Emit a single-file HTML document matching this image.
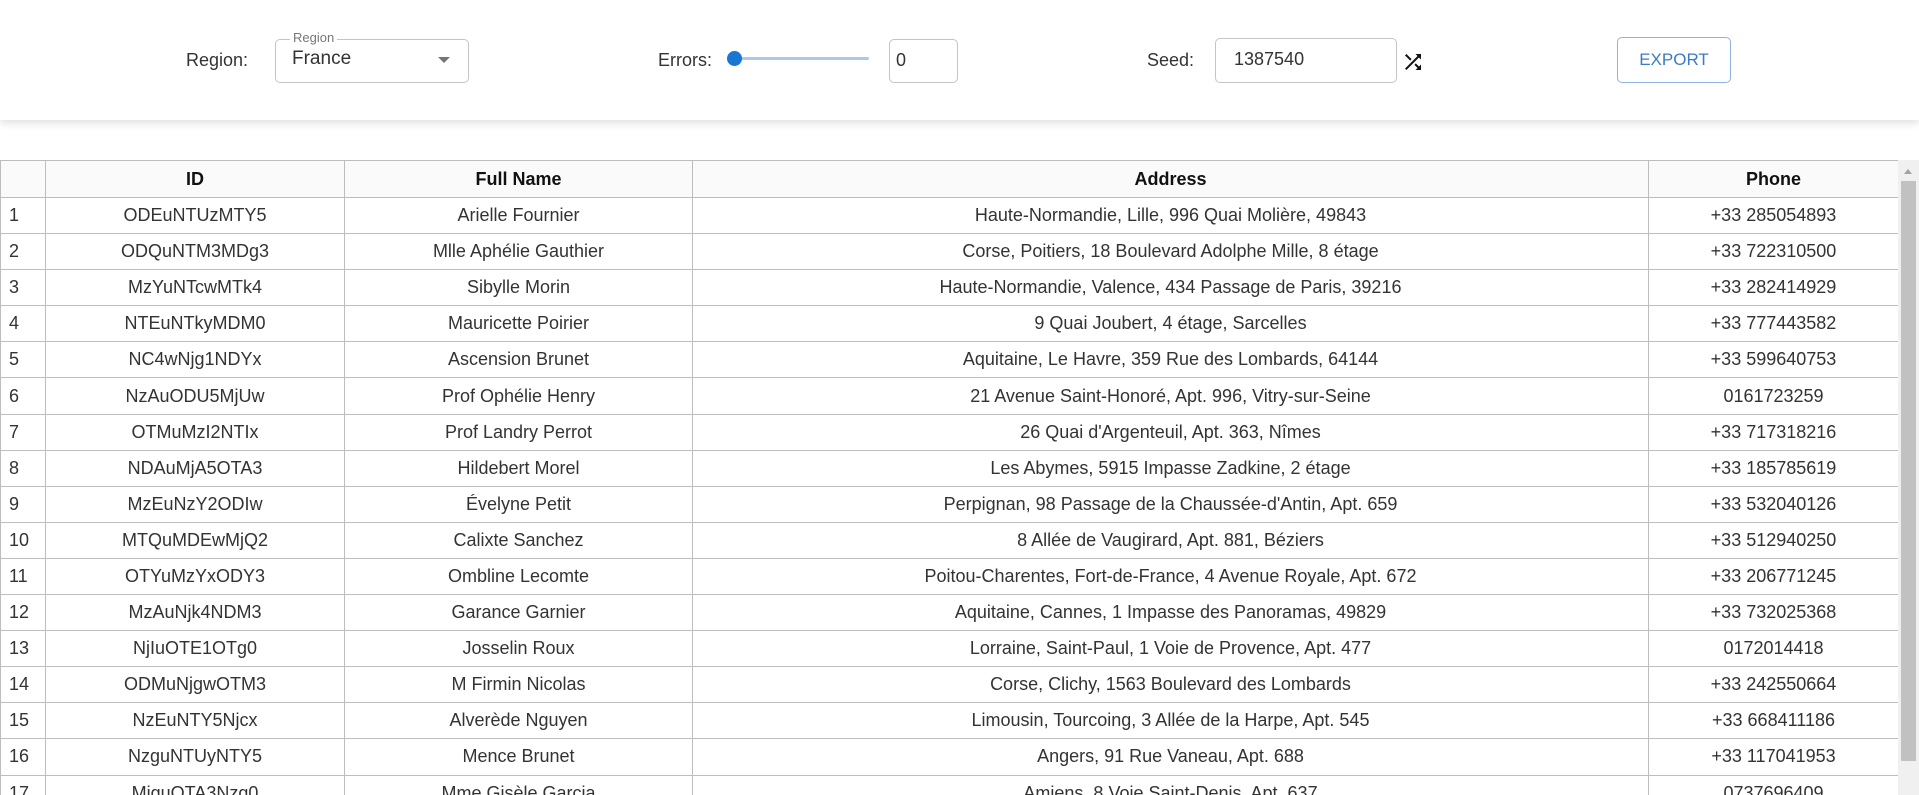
<!DOCTYPE html>
<html><head><meta charset="utf-8"><style>
*{box-sizing:border-box;margin:0;padding:0}
body{width:1919px;height:795px;overflow:hidden;background:#fff;font-family:"Liberation Sans",sans-serif;color:#333;position:relative}
.bar{position:absolute;left:0;top:0;width:1919px;height:120px;background:#fff;box-shadow:0 3px 8px rgba(0,0,0,.13)}
.abs{position:absolute}
.lbl{font-size:18px;color:#333}
.box{border:1px solid #c4c4c4;border-radius:5px;background:#fff}
.tw{position:absolute;left:0;top:160px;width:1898px;height:635px;overflow:hidden}
table{border-collapse:collapse;width:1898px;table-layout:fixed;font-size:18px;color:#333}
th,td{border:1px solid #bdbdbd;text-align:center;height:36.1px;padding:0;white-space:nowrap;overflow:hidden}
th{height:37px;background:#fafafa;font-weight:bold;color:#111}
td:first-child{text-align:left;padding-left:8px}
.sb{position:absolute;left:1898px;top:160px;width:21px;height:635px;background:#f0f0f0}
</style></head><body>
<div class="bar">
 <div class="abs lbl" style="left:186px;top:50px">Region:</div>
 <div class="abs box" style="left:275px;top:39px;width:194px;height:44px"></div>
 <div class="abs" style="left:290px;top:30px;background:#fff;padding:0 3px;font-size:13px;color:#777">Region</div>
 <div class="abs" style="left:292px;top:48px;font-size:19px;color:#333">France</div>
 <div class="abs" style="left:438px;top:57px;width:0;height:0;border-left:6px solid transparent;border-right:6px solid transparent;border-top:6px solid #757575"></div>

 <div class="abs lbl" style="left:658px;top:50px">Errors:</div>
 <div class="abs" style="left:734px;top:57px;width:135px;height:3px;background:#a9c8ec;border-radius:2px"></div>
 <div class="abs" style="left:727px;top:51px;width:15px;height:15px;border-radius:50%;background:#1976d2"></div>
 <div class="abs box" style="left:889px;top:39px;width:69px;height:44px"></div>
 <div class="abs" style="left:896px;top:50px;font-size:18px;color:#333">0</div>

 <div class="abs lbl" style="left:1147px;top:50px">Seed:</div>
 <div class="abs box" style="left:1215px;top:38px;width:182px;height:45px"></div>
 <div class="abs" style="left:1234px;top:49px;font-size:18px;color:#333">1387540</div>
 <svg class="abs" style="left:1401px;top:50px" width="24" height="24" viewBox="0 0 24 24"><path fill="#111" d="M10.59 9.17 5.41 4 4 5.41l5.17 5.17 1.42-1.41zM14.5 4l2.04 2.04L4 18.59 5.41 20 17.960 7.46 20 9.5V4h-5.5zm.33 9.41-1.41 1.41 3.13 3.13L14.5 20H20v-5.5l-2.04 2.04-3.13-3.13z"/></svg>

 <div class="abs" style="left:1617px;top:37px;width:114px;height:46px;border:1px solid #8fb4dc;border-radius:5px;color:#3a7cc4;font-size:17px;text-align:center;line-height:44px">EXPORT</div>
</div>

<div class="tw"><table>
<colgroup><col style="width:45px"><col style="width:299px"><col style="width:348px"><col style="width:956px"><col style="width:250px"></colgroup>
<tr><th></th><th>ID</th><th>Full Name</th><th>Address</th><th>Phone</th></tr>
<tr><td>1</td><td>ODEuNTUzMTY5</td><td>Arielle Fournier</td><td>Haute-Normandie, Lille, 996 Quai Molière, 49843</td><td>+33 285054893</td></tr>
<tr><td>2</td><td>ODQuNTM3MDg3</td><td>Mlle Aphélie Gauthier</td><td>Corse, Poitiers, 18 Boulevard Adolphe Mille, 8 étage</td><td>+33 722310500</td></tr>
<tr><td>3</td><td>MzYuNTcwMTk4</td><td>Sibylle Morin</td><td>Haute-Normandie, Valence, 434 Passage de Paris, 39216</td><td>+33 282414929</td></tr>
<tr><td>4</td><td>NTEuNTkyMDM0</td><td>Mauricette Poirier</td><td>9 Quai Joubert, 4 étage, Sarcelles</td><td>+33 777443582</td></tr>
<tr><td>5</td><td>NC4wNjg1NDYx</td><td>Ascension Brunet</td><td>Aquitaine, Le Havre, 359 Rue des Lombards, 64144</td><td>+33 599640753</td></tr>
<tr><td>6</td><td>NzAuODU5MjUw</td><td>Prof Ophélie Henry</td><td>21 Avenue Saint-Honoré, Apt. 996, Vitry-sur-Seine</td><td>0161723259</td></tr>
<tr><td>7</td><td>OTMuMzI2NTIx</td><td>Prof Landry Perrot</td><td>26 Quai d'Argenteuil, Apt. 363, Nîmes</td><td>+33 717318216</td></tr>
<tr><td>8</td><td>NDAuMjA5OTA3</td><td>Hildebert Morel</td><td>Les Abymes, 5915 Impasse Zadkine, 2 étage</td><td>+33 185785619</td></tr>
<tr><td>9</td><td>MzEuNzY2ODIw</td><td>Évelyne Petit</td><td>Perpignan, 98 Passage de la Chaussée-d'Antin, Apt. 659</td><td>+33 532040126</td></tr>
<tr><td>10</td><td>MTQuMDEwMjQ2</td><td>Calixte Sanchez</td><td>8 Allée de Vaugirard, Apt. 881, Béziers</td><td>+33 512940250</td></tr>
<tr><td>11</td><td>OTYuMzYxODY3</td><td>Ombline Lecomte</td><td>Poitou-Charentes, Fort-de-France, 4 Avenue Royale, Apt. 672</td><td>+33 206771245</td></tr>
<tr><td>12</td><td>MzAuNjk4NDM3</td><td>Garance Garnier</td><td>Aquitaine, Cannes, 1 Impasse des Panoramas, 49829</td><td>+33 732025368</td></tr>
<tr><td>13</td><td>NjIuOTE1OTg0</td><td>Josselin Roux</td><td>Lorraine, Saint-Paul, 1 Voie de Provence, Apt. 477</td><td>0172014418</td></tr>
<tr><td>14</td><td>ODMuNjgwOTM3</td><td>M Firmin Nicolas</td><td>Corse, Clichy, 1563 Boulevard des Lombards</td><td>+33 242550664</td></tr>
<tr><td>15</td><td>NzEuNTY5Njcx</td><td>Alverède Nguyen</td><td>Limousin, Tourcoing, 3 Allée de la Harpe, Apt. 545</td><td>+33 668411186</td></tr>
<tr><td>16</td><td>NzguNTUyNTY5</td><td>Mence Brunet</td><td>Angers, 91 Rue Vaneau, Apt. 688</td><td>+33 117041953</td></tr>
<tr><td>17</td><td>MjguOTA3Nzg0</td><td>Mme Gisèle Garcia</td><td>Amiens, 8 Voie Saint-Denis, Apt. 637</td><td>0737696409</td></tr>
</table></div>
<div class="sb">
 <div class="abs" style="left:6px;top:9px;width:0;height:0;border-left:4px solid transparent;border-right:4px solid transparent;border-bottom:5px solid #a3a3a3"></div>
 <div class="abs" style="left:3px;top:21px;width:15px;height:580px;background:#c1c1c1"></div>
</div>
</body></html>
